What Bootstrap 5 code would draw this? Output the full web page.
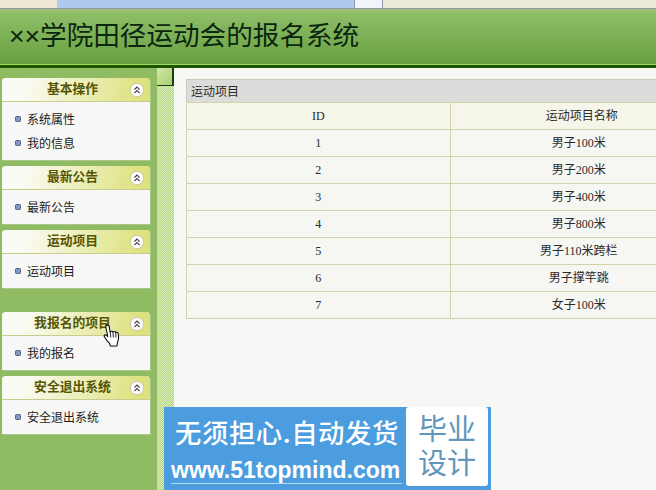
<!DOCTYPE html>
<html lang="zh">
<head>
<meta charset="utf-8">
<title>××学院田径运动会的报名系统</title>
<link href="https://cdn.jsdelivr.net/npm/bootstrap@5.3.0/dist/css/bootstrap.min.css" rel="stylesheet">
<style>
html,body{height:490px;overflow:hidden}
body{position:relative;background:#8fbb62;font-family:"Noto Sans CJK SC",sans-serif;font-size:12px;color:#222}
.chrome{height:9px;border-bottom:1px solid #8f99ad;background:#ece9d8}
.chrome-a{width:57px;background:#efe9d6}
.chrome-b{width:297px;background:#aec8ee}
.chrome-c{width:29px;background:#f2f4fa;border-left:1px solid #8f99ad;border-right:1px solid #8f99ad}
.topband{height:59px;background:linear-gradient(#a9bf78 0,#8fbd68 4px,#7cb055 28px,#66a13e 55px);border-bottom:3px solid #1c5600;box-shadow:inset 0 -1px 0 #9fdc62;padding-left:9px}
.topband h1{margin:0;font-family:"Liberation Sans","Noto Sans CJK SC",serif;font-size:26.6px;font-weight:400;color:#0a2510;line-height:55px;white-space:nowrap}
.shell{height:422px}
.side{width:157px;padding:10px 7px 0 2px}
.panel{border:0;border-radius:4px 4px 0 0;background:#f7f7f5;box-shadow:1px 1px 0 #a9c78a;margin-bottom:6px;overflow:hidden}
.panel-gap{margin-bottom:24px}
.panel-head{height:24px;background:linear-gradient(100deg,#fbfbf5 14%,#dde27f 92%);border-bottom:1px solid #c9cd8f;padding-right:7px}
.panel-head strong{font-size:12.8px;color:#565504;line-height:20px;white-space:nowrap}
.chev{position:absolute;right:6px;top:5px;width:14px;height:14px}
.panel-body-x{padding:5px 0 5px 13px}
.item{height:24px;line-height:24px;color:#1b1b1b;white-space:nowrap}
.dot{width:6px;height:6px;border-radius:1.5px;background:#8496c2;border:1px solid #56637f;margin-right:6px}
.strip{width:17px;background:repeating-conic-gradient(#e0eec0 0 25%,#b3d47f 0 50%) 0 0/2px 2px}
.toggler{width:17px;height:18px;background:linear-gradient(135deg,#d3e6a9,#a9d06f);border-right:2px solid #173f10;border-bottom:1px solid #173f10}
.work{background:#f7f7f5;padding:11px 0 0 12px;overflow:hidden}
.grid-wrap{width:528px;font-family:"Liberation Serif","Noto Sans CJK SC",serif;color:#2a2a2a}
.grid-title{height:23px;line-height:22px;background:#dcdcda;border:1px solid #ccccb8;border-bottom:0;padding-left:4px;font-family:"Noto Sans CJK SC",sans-serif}
.grid-table{width:528px;table-layout:fixed;margin:0;--bs-table-bg:transparent;--bs-table-border-color:#d2d3ad}
.grid-table>*>tr>*{height:27px;padding:0;text-align:center;vertical-align:middle;border:1px solid #d2d3ad;font-size:12px;font-weight:400;color:#2a2a2a;line-height:25px}
.grid-table thead th{background:#f5f5e9}
.grid-table tbody td{background:#f6f6f3}
.grid-table tbody td:last-child{padding-right:6px}
.promo{position:absolute;left:164px;top:407px;width:327px;height:83px;background:#4b9de0;color:#fff}
.promo-left{width:242px;padding:8px 0 0 11px}
.promo-a{font-size:26.4px;font-weight:500;line-height:34px;white-space:nowrap;letter-spacing:.55px}
.promo-b{font-family:"Liberation Sans",sans-serif;font-weight:700;font-size:23px;line-height:26px;margin:8px 0 0 -4px;border-bottom:1px solid #bcdcf5;white-space:nowrap;width:231px}
.promo-right{width:82px;height:79px;background:#fff;border-radius:3px;color:#5f97bd;font-family:"Liberation Sans","Noto Sans CJK SC",sans-serif;font-size:29px;line-height:34px;padding-top:6px}
.hand{position:absolute;left:103px;top:324px;width:19px;height:24px}
</style>
</head>
<body>
<div class="chrome d-flex">
  <div class="chrome-a"></div><div class="chrome-b"></div><div class="chrome-c"></div>
</div>
<header class="topband"><h1>××学院田径运动会的报名系统</h1></header>
<div class="shell d-flex">
  <aside class="side flex-shrink-0">
    <section class="panel">
      <div class="panel-head position-relative text-center"><strong>基本操作</strong>
        <svg class="chev" viewBox="0 0 14 14"><circle cx="7" cy="7" r="6.6" fill="#fff" stroke="#c9c9a8"/><path d="M4.5 6.5 7 4l2.5 2.5M4.5 10 7 7.5 9.5 10" fill="none" stroke="#444" stroke-width="1.1"/></svg></div>
      <div class="panel-body-x">
        <div class="item d-flex align-items-center"><span class="dot"></span>系统属性</div>
        <div class="item d-flex align-items-center"><span class="dot"></span>我的信息</div>
      </div>
    </section>
    <section class="panel">
      <div class="panel-head position-relative text-center"><strong>最新公告</strong>
        <svg class="chev" viewBox="0 0 14 14"><circle cx="7" cy="7" r="6.6" fill="#fff" stroke="#c9c9a8"/><path d="M4.5 6.5 7 4l2.5 2.5M4.5 10 7 7.5 9.5 10" fill="none" stroke="#444" stroke-width="1.1"/></svg></div>
      <div class="panel-body-x">
        <div class="item d-flex align-items-center"><span class="dot"></span>最新公告</div>
      </div>
    </section>
    <section class="panel panel-gap">
      <div class="panel-head position-relative text-center"><strong>运动项目</strong>
        <svg class="chev" viewBox="0 0 14 14"><circle cx="7" cy="7" r="6.6" fill="#fff" stroke="#c9c9a8"/><path d="M4.5 6.5 7 4l2.5 2.5M4.5 10 7 7.5 9.5 10" fill="none" stroke="#444" stroke-width="1.1"/></svg></div>
      <div class="panel-body-x">
        <div class="item d-flex align-items-center"><span class="dot"></span>运动项目</div>
      </div>
    </section>
    <section class="panel">
      <div class="panel-head position-relative text-center"><strong>我报名的项目</strong>
        <svg class="chev" viewBox="0 0 14 14"><circle cx="7" cy="7" r="6.6" fill="#fff" stroke="#c9c9a8"/><path d="M4.5 6.5 7 4l2.5 2.5M4.5 10 7 7.5 9.5 10" fill="none" stroke="#444" stroke-width="1.1"/></svg></div>
      <div class="panel-body-x">
        <div class="item d-flex align-items-center"><span class="dot"></span>我的报名</div>
      </div>
    </section>
    <section class="panel">
      <div class="panel-head position-relative text-center"><strong>安全退出系统</strong>
        <svg class="chev" viewBox="0 0 14 14"><circle cx="7" cy="7" r="6.6" fill="#fff" stroke="#c9c9a8"/><path d="M4.5 6.5 7 4l2.5 2.5M4.5 10 7 7.5 9.5 10" fill="none" stroke="#444" stroke-width="1.1"/></svg></div>
      <div class="panel-body-x">
        <div class="item d-flex align-items-center"><span class="dot"></span>安全退出系统</div>
      </div>
    </section>
  </aside>
  <div class="strip flex-shrink-0"><div class="toggler"></div></div>
  <main class="work flex-grow-1">
    <div class="grid-wrap">
      <div class="grid-title">运动项目</div>
      <table class="table grid-table">
        <thead><tr><th>ID</th><th>运动项目名称</th></tr></thead>
        <tbody>
          <tr><td>1</td><td>男子100米</td></tr>
          <tr><td>2</td><td>男子200米</td></tr>
          <tr><td>3</td><td>男子400米</td></tr>
          <tr><td>4</td><td>男子800米</td></tr>
          <tr><td>5</td><td>男子110米跨栏</td></tr>
          <tr><td>6</td><td>男子撑竿跳</td></tr>
          <tr><td>7</td><td>女子100米</td></tr>
        </tbody>
      </table>
    </div>
  </main>
</div>
<svg class="hand" viewBox="0 0 19 24"><path d="M3.5 1.6c1.2-.9 2.6 0 2.8 1.3l.8 5.4c.2-1.2 2.4-1.4 2.8 0 .3-1 2.3-1.1 2.7.3.5-.8 2.3-.6 2.6.9.5 2.7.5 6-.6 8.6l-.7 3.9H7.2l-.6-2.6C5 18 2.6 15 1.4 12.8c-.8-1.5 1-2.6 2.2-1.5l1.2 1.2-1.9-9.2c-.1-.9 0-2 .6-2.7z" fill="#fff" stroke="#111" stroke-width="1.1" stroke-linejoin="round"/><path d="M7.3 8.5l.5 5M10 8.5l.4 5M12.8 9l.2 4.6" fill="none" stroke="#111" stroke-width=".9"/></svg>
<aside class="promo d-flex">
  <div class="promo-left">
    <div class="promo-a">无须担心.自动发货</div>
    <div class="promo-b">www.51topmind.com</div>
  </div>
  <div class="promo-right text-center">毕业<br>设计</div>
</aside>
<script src="https://cdn.jsdelivr.net/npm/bootstrap@5.3.0/dist/js/bootstrap.bundle.min.js"></script>
</body>
</html>
